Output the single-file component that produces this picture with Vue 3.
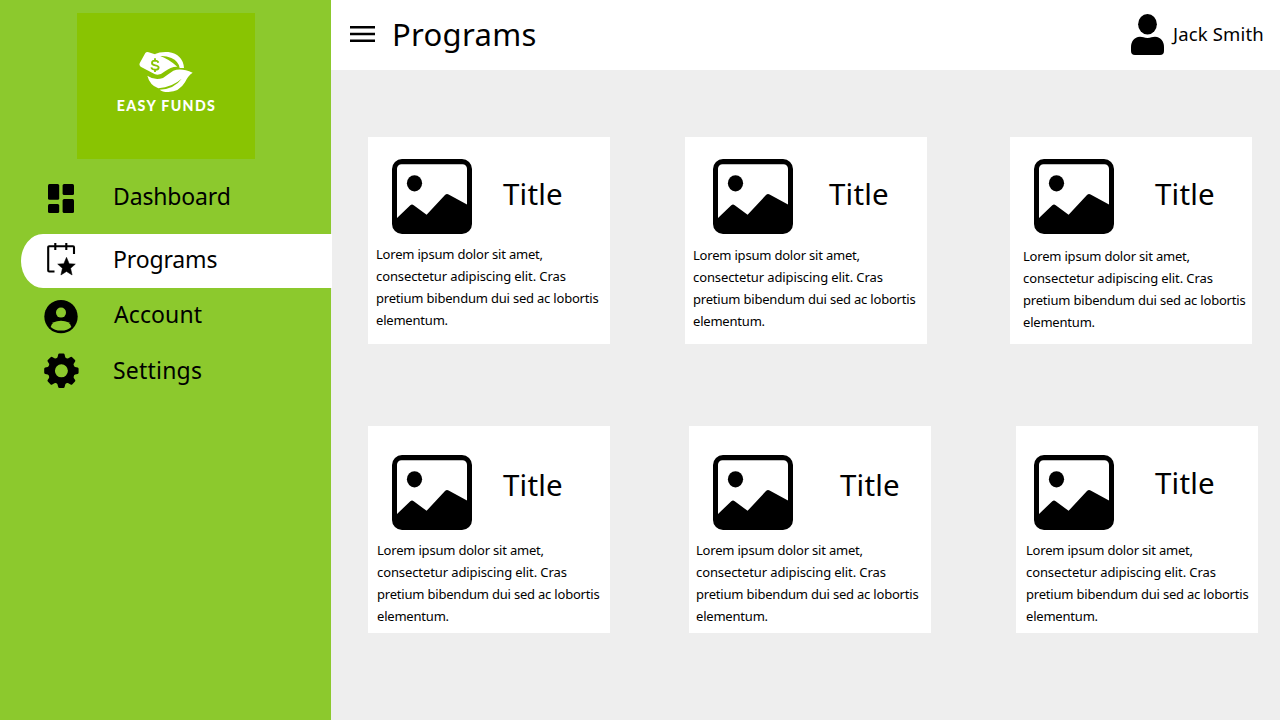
<script setup>
const nav = [
  { key: 'dashboard', label: 'Dashboard' },
  { key: 'programs', label: 'Programs', active: true },
  { key: 'account', label: 'Account' },
  { key: 'settings', label: 'Settings' },
]
const lines = [
  'Lorem ipsum dolor sit amet,',
  'consectetur adipiscing elit. Cras',
  'pretium bibendum dui sed ac lobortis',
  'elementum.',
]
const rows = [[1, 2, 3], [4, 5, 6]]
const teeth = [0, 45, 90, 135, 180, 225, 270, 315]
</script>

<template>
  <div class="app">
    <aside class="sidebar">
      <div class="brand">
        <svg class="brand-mark" viewBox="99 30 168 129" aria-hidden="true">
          <g fill="#fff">
            <path d="M121 39Q125 34 131 37L164 47Q192 57 217 80Q198 79 180 94Q164 108 150 103L107 80Q101 76 104 70Z" />
            <path d="M148 43Q166 34 190 36Q234 43 237 84H224Q221 64 199 54Q180 46 160 49Z" />
            <path d="M127 107Q148 122 174 114Q190 102 205 92Q228 82 263 98Q248 108 240 127Q222 157 188 156Q172 156 164 149Q208 147 230 116Q202 141 160 145Q134 135 127 107Z" />
          </g>
          <path d="M160 68C158 60 141 60 141 69C140 79 161 73 161 83C160 92 141 91 139 82M150 55V65M150 87V96" fill="none" stroke="#89c402" stroke-width="5.5" />
        </svg>
        <span class="brand-name">EASY FUNDS</span>
      </div>
      <nav class="nav">
        <a v-for="n in nav" :key="n.key" class="nav-item" :class="[n.key, { active: n.active }]">
          <svg class="nav-icon" viewBox="0 0 36 36" aria-hidden="true">
            <g v-if="n.key === 'dashboard'">
              <rect x="5" y="4" width="11.2" height="15.7" rx="1.5" />
              <rect x="19.6" y="4" width="11.4" height="11" rx="1.5" />
              <rect x="5" y="24" width="11.2" height="9" rx="1.5" />
              <rect x="19.6" y="19" width="11.4" height="14" rx="1.5" />
            </g>
            <g v-else-if="n.key === 'programs'">
              <path d="M11.5 29.5H6.2Q5.2 29.5 5.2 28.5V5.2Q5.2 4.2 6.2 4.2H30Q31 4.2 31 5.2V12M12.3 1V8M23.3 1V8" fill="none" stroke="#000" stroke-width="2.1" />
              <path d="M23.5 15.3L26.2 21.7L32.3 22.1L27.6 26.3L29.1 33L23.5 29.5L17.9 33L19.4 26.3L14.7 22.1L20.8 21.7Z" stroke="#000" stroke-width="0.5" />
            </g>
            <g v-else-if="n.key === 'account'" transform="translate(0 0.6)">
              <circle cx="18" cy="18" r="16.7" />
              <circle class="hole" cx="18" cy="14" r="5" />
              <path class="hole" d="M7.7 28.3Q9 22.2 18 22.2T28.3 28.3Q24.6 32 18 32T7.7 28.3Z" />
            </g>
            <g v-else transform="translate(18.4 18.8)">
              <circle r="10" fill="none" stroke="#000" stroke-width="7" />
              <path v-for="t in teeth" :key="t" :transform="`rotate(${t})`" d="M-5 -11.5Q-3.5 -13.5 -3.2 -16.2Q-3 -17.2 -2 -17.2H2Q3 -17.2 3.2 -16.2Q3.5 -13.5 5 -11.5Z" />
            </g>
          </svg>
          <span class="nav-label">{{ n.label }}</span>
        </a>
      </nav>
    </aside>

    <div class="main">
      <header class="topbar">
        <svg class="menu" viewBox="0 0 25 16" aria-hidden="true">
          <path d="M0 1.3H25M0 8H25M0 14.7H25" stroke="#000" stroke-width="2.5" />
        </svg>
        <h1>Programs</h1>
        <div class="user">
          <svg class="avatar" viewBox="0 0 33 41" aria-hidden="true">
            <ellipse cx="16.5" cy="10.2" rx="9.4" ry="10.2" />
            <path d="M9 22.8C12 22.8 13 24 16.5 24S21 22.8 24 22.8C30 22.8 33 28 33 33V37Q33 41 29 41H4Q0 41 0 37V33C0 28 3 22.8 9 22.8Z" />
          </svg>
          <span>Jack Smith</span>
        </div>
      </header>

      <main class="content">
        <section v-for="(row, r) in rows" :key="r" class="row">
          <article v-for="c in row" :key="c" class="card" :class="'card-' + c">
            <div class="card-head">
              <svg class="picture" viewBox="0 0 80 75" aria-hidden="true">
                <path fill-rule="evenodd" d="M10 0H70A10 10 0 0 1 80 10V65A10 10 0 0 1 70 75H10A10 10 0 0 1 0 65V10A10 10 0 0 1 10 0ZM9.5 5.2A4.5 4.5 0 0 0 5 9.7V59L18.3 46.2Q20 44.7 21.7 46.2L34.6 55.8L53 36Q54.7 34.2 56.6 35.4L75 45.6V9.7A4.5 4.5 0 0 0 70.5 5.2Z" />
                <ellipse cx="22.5" cy="24.3" rx="7.6" ry="8.1" />
              </svg>
              <h2>Title</h2>
            </div>
            <p><span v-for="l in lines" :key="l">{{ l }}</span></p>
          </article>
        </section>
      </main>
    </div>
  </div>
</template>

<style>
body { margin: 0; }
</style>

<style scoped>
.app {
  display: flex;
  width: 1280px;
  height: 720px;
  overflow: hidden;
  background: #eee;
  color: #000;
  font-family: "Noto Sans", "Open Sans", sans-serif;
}
svg { display: block; flex: none; }
h1, h2, p { margin: 0; font-weight: 400; }

.sidebar { width: 331px; flex: none; background: #8cc92d; }
.brand {
  display: flex;
  flex-direction: column;
  align-items: center;
  box-sizing: border-box;
  width: 178px;
  height: 146px;
  margin: 13px 0 0 77px;
  padding-top: 37px;
  background: #89c402;
}
.brand-mark { width: 56px; height: 43px; }
.brand-name {
  margin: 3px 0 0 1px;
  color: #fff;
  font: 900 14.2px/20px Lato, sans-serif;
  letter-spacing: 1.35px;
  white-space: nowrap;
}

.nav { display: flex; flex-direction: column; margin-top: 12px; }
.nav-item { display: flex; align-items: center; height: 54px; margin-left: 21px; }
.nav-icon { width: 36px; height: 36px; margin-left: 22px; }
.nav-label { margin-left: 34px; font-size: 23px; line-height: 30px; letter-spacing: -0.15px; }
.dashboard { margin-bottom: 9px; }
.dashboard .nav-label { padding-bottom: 4px; }
.programs { width: 311px; border-radius: 22px 0 0 22px / 27px 0 0 27px; }
.programs .nav-icon { margin-bottom: 2px; }
.programs .nav-label { padding-bottom: 4px; }
.active { background: #fff; }
.account { height: 55px; }
.account .nav-label { margin-left: 35px; padding-bottom: 4px; letter-spacing: 0.1px; }
.settings .nav-label { letter-spacing: 0.2px; }
.hole { fill: #8cc92d; }

.main { flex: 1; min-width: 0; }
.topbar { display: flex; align-items: center; height: 70px; background: #fff; }
.menu { width: 25px; height: 16px; margin: 0 0 2px 19px; }
h1 { margin-left: 17px; font-size: 31px; line-height: 40px; letter-spacing: 0.3px; padding-bottom: 3px; }
.user { display: flex; align-items: center; margin: 0 16px 1px auto; }
.user span { width: 91px; margin-left: 9px; padding-bottom: 2px; font-size: 18.5px; line-height: 24px; letter-spacing: 0.15px; white-space: nowrap; }
.avatar { width: 33px; height: 41px; }

.content { display: flex; flex-direction: column; gap: 82px; padding-top: 67px; }
.row { display: flex; }
.card { box-sizing: border-box; width: 242px; height: 207px; flex: none; background: #fff; }
.card-head { display: flex; box-sizing: border-box; height: var(--head); padding: var(--top) 0 0 var(--icon-x); }
.picture { width: 80px; height: 75px; }
h2 { margin: var(--title-y) 0 0 var(--title-x); font-size: 29.5px; line-height: 40px; letter-spacing: 0.2px; }
p { margin-left: var(--text-x); font-size: 13px; line-height: 22px; white-space: nowrap; }
p span { display: block; letter-spacing: -0.2px; }
p span:nth-child(2) { letter-spacing: -0.1px; }

.card-1 { margin-left: 37px; --head: 106px; --top: 22px; --icon-x: 24px; --title-x: 31px; --title-y: 15px; --text-x: 8px; }
.card-2 { margin-left: 75px; --head: 107px; --top: 22px; --icon-x: 28px; --title-x: 36px; --title-y: 15px; --text-x: 8px; }
.card-3 { margin-left: 83px; --head: 108px; --top: 22px; --icon-x: 24px; --title-x: 41px; --title-y: 15px; --text-x: 13px; }
.card-4 { margin-left: 37px; --head: 113px; --top: 29px; --icon-x: 24px; --title-x: 31px; --title-y: 10px; --text-x: 9px; }
.card-5 { margin-left: 79px; --head: 113px; --top: 29px; --icon-x: 24px; --title-x: 47px; --title-y: 10px; --text-x: 7px; }
.card-6 { margin-left: 85px; --head: 113px; --top: 29px; --icon-x: 18px; --title-x: 41px; --title-y: 8px; --text-x: 10px; }
</style>
